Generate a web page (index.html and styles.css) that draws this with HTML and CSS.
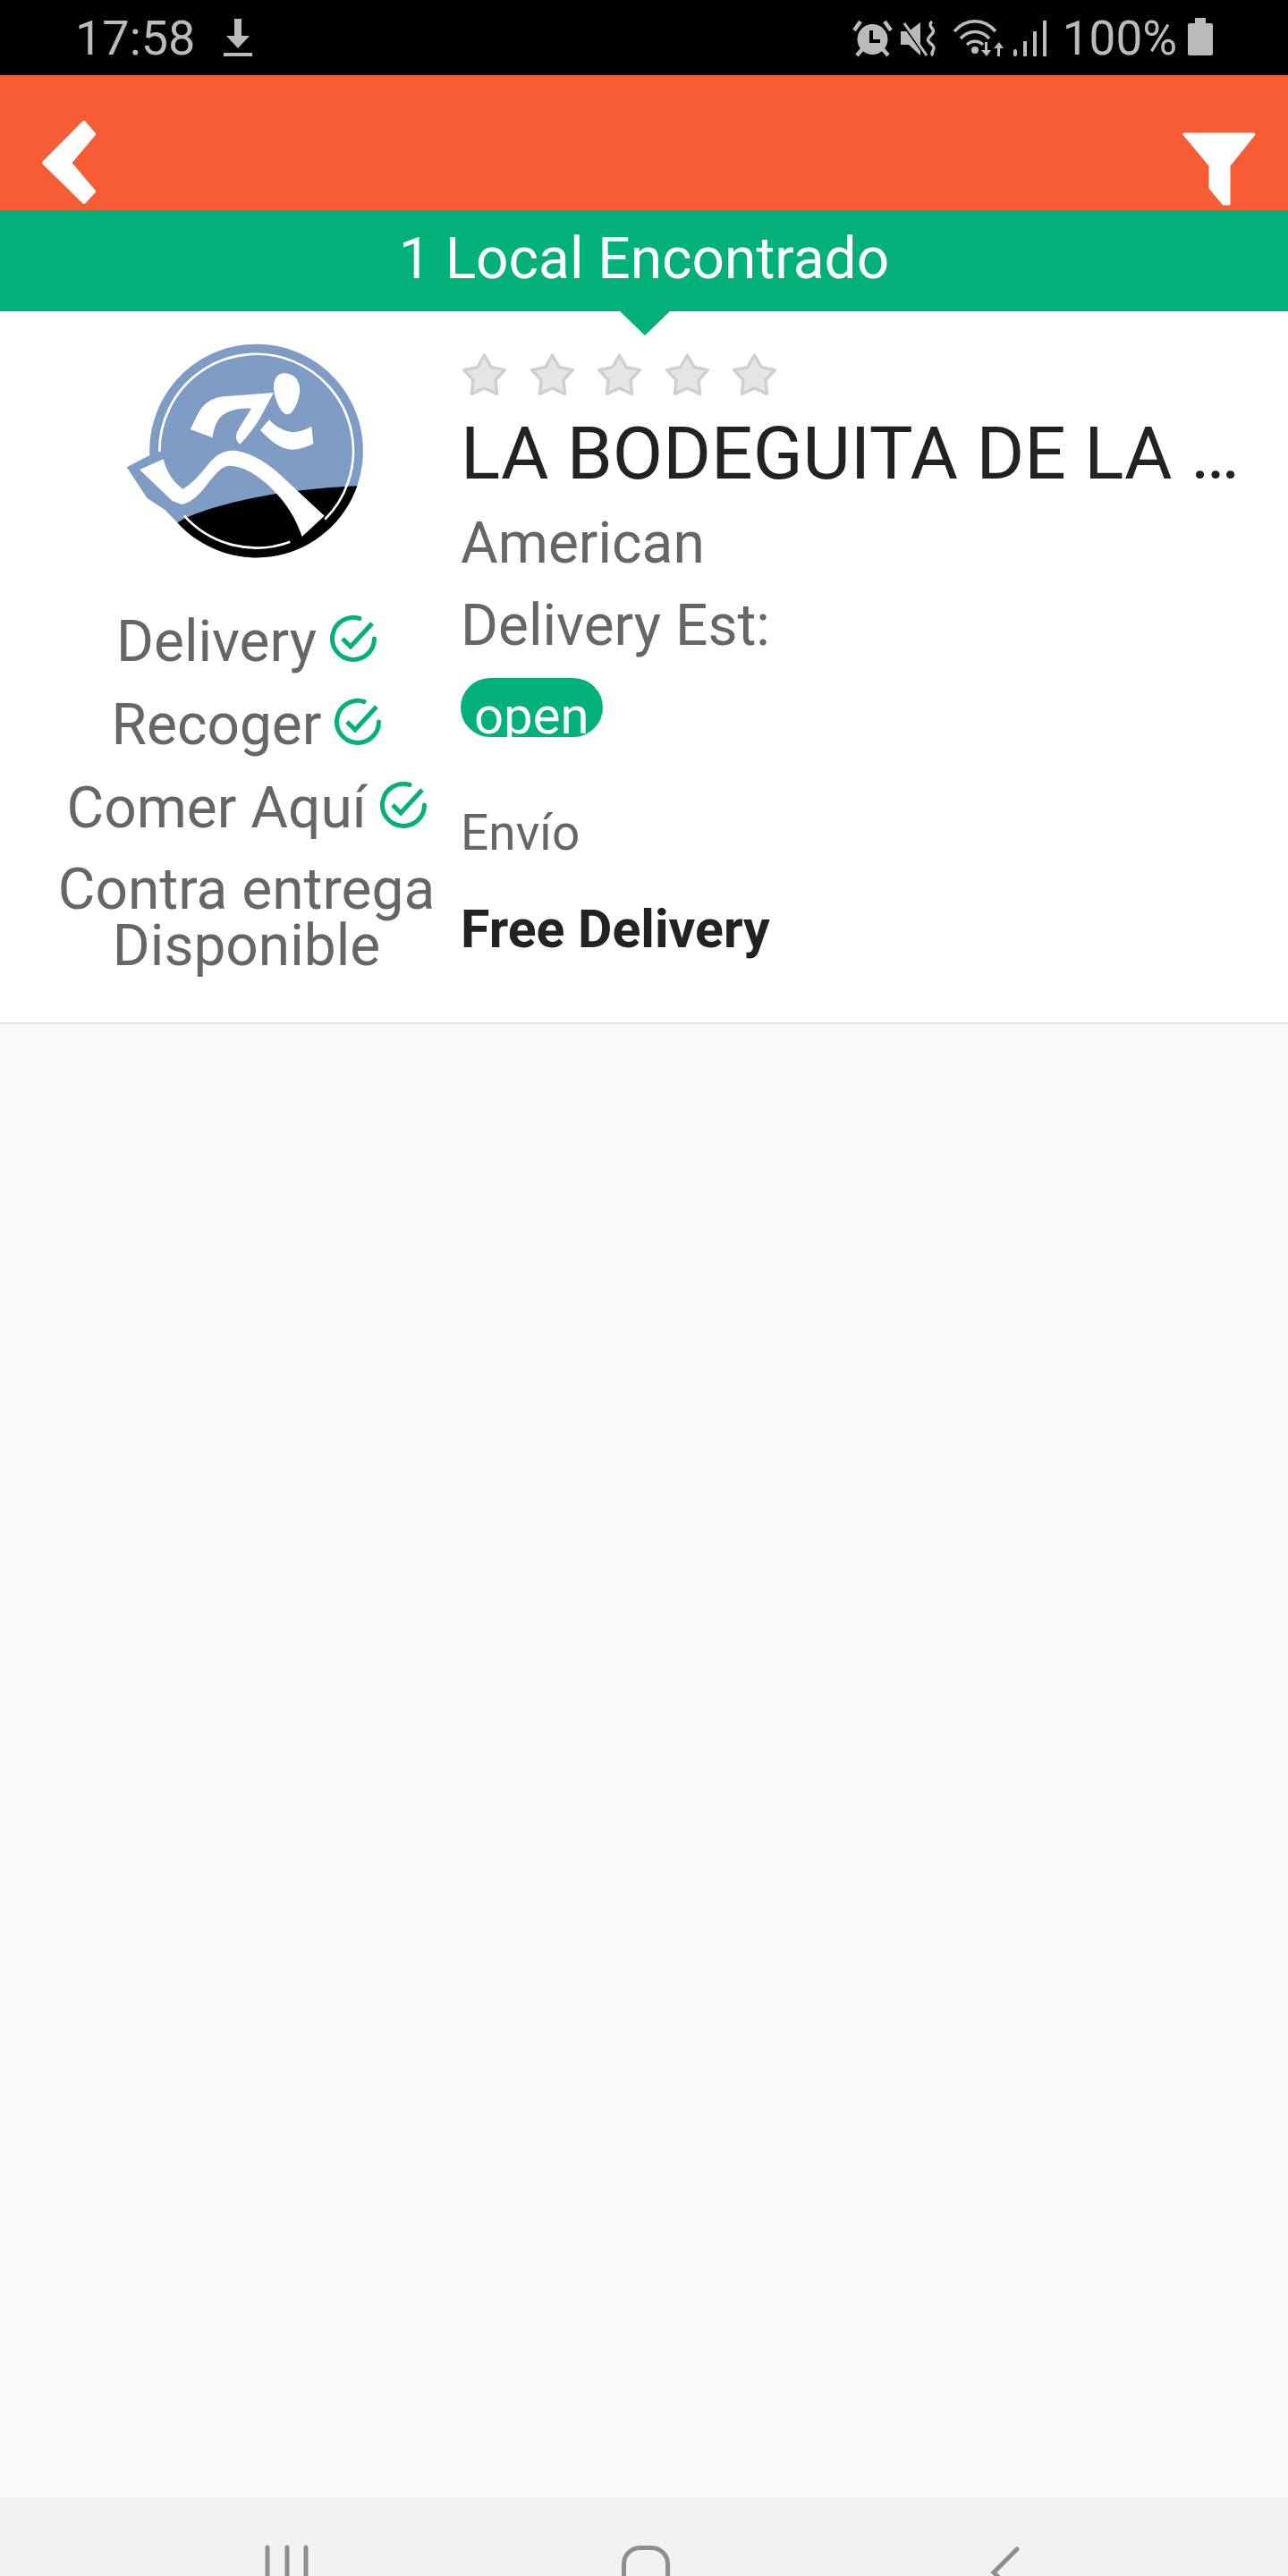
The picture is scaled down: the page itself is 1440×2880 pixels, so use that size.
FILE: index.html
```html
<!DOCTYPE html>
<html lang="es">
<head>
    <meta charset="UTF-8">
    <meta name="viewport" content="width=device-width, initial-scale=1.0">
    <title>Locales</title>
    <link rel="stylesheet" href="styles.css">
</head>
<body>
<div class="pantalla">
    <!-- barra de estado -->
    <div class="estado">
        <div class="estado-izq">
            <span class="hora">17:58</span>
            <svg class="ico-descarga" width="32" height="42" viewBox="0 0 32 42"><path d="M12 0h8v19h9L16 33 3 19h9z" fill="#bbb"/><rect y="38" width="32" height="4" fill="#bbb"/></svg>
        </div>
        <div class="estado-der">
            <svg width="45" height="42" viewBox="0 0 45 42" class="ico-alarma">
                <circle cx="22.500" cy="22" r="17" fill="#bbb"/>
                <path d="M21 12v12h10" fill="none" stroke="#000" stroke-width="4"/>
                <path d="M2 12L9 2M43 12L36 2M5 40l6-7M40 40l-6-7" stroke="#bbb" stroke-width="4.500" fill="none"/>
            </svg>
            <svg width="42" height="42" viewBox="0 0 42 42" class="ico-mudo">
                <path d="M0 13h9L22 3v37L9 28H0z" fill="#bbb"/>
                <path d="M4 6l24 34" stroke="#000" stroke-width="4"/>
                <path d="M4 4l25 36" stroke="#bbb" stroke-width="3"/>
                <path d="M35 2c-7 6 6 8 0 14s-6 7 0 12-3 8 1 12" fill="none" stroke="#bbb" stroke-width="3.500"/>
            </svg>
            <svg width="56" height="44" viewBox="0 0 56 44" class="ico-wifi">
                <path d="M1 15C14 0 34 0 47 15M8 23c9-10 23-10 32 0M15 30c5-5 13-5 18 0" fill="none" stroke="#bbb" stroke-width="3.500"/>
                <circle cx="24" cy="36" r="4" fill="#bbb"/>
                <path d="M35 27h3v9h4l-5 7-6-7h4zM49 43h3v-9h4l-5-7-6 7h4z" fill="#bbb"/>
            </svg>
            <svg width="37" height="40" viewBox="0 0 37 40" class="ico-senal">
                <rect y="32" width="4" height="8" rx="2" fill="#bbb"/>
                <rect x="11" y="23" width="4" height="17" fill="#bbb"/>
                <rect x="22" y="12" width="4" height="28" fill="#bbb"/>
                <rect x="33" y="0" width="4" height="40" fill="#bbb"/>
            </svg>
            <span class="bateria-txt">100%</span>
            <svg width="28" height="42" viewBox="0 0 28 42"><path d="M8 0h12v6h6a2 2 0 0 1 2 2v32a2 2 0 0 1-2 2H2a2 2 0 0 1-2-2V8a2 2 0 0 1 2-2h6z" fill="#bbb"/></svg>
        </div>
    </div>

    <div class="topo">
        <svg class="voltar" width="60" height="93" viewBox="0 0 60 93"><path d="M47 2L58 15 31 47 58 79 47 91 2 47z" fill="#fff" stroke="#fff" stroke-width="4" stroke-linejoin="round"/></svg>
        <svg class="filtro" width="82" height="82" viewBox="0 0 82 82"><path d="M2 2H80L52 37V80L46 80 31 62V37z" fill="#fff" stroke="#fff" stroke-width="3" stroke-linejoin="round"/></svg>
    </div>

    <div class="faixa">1 Local Encontrado</div>

    <div class="card">
        <div class="card-esq">
            <svg class="logo" width="300" height="280" viewBox="0 0 900 840">
                <path d="M62 487L139 447A358 358 0 1 1 232.500 673.500L190 630 130 590Z" fill="#7f9dc4"/>
                <path d="M232.500 673.500C250 660 265 655 275 650 400 600 600 560 835 550A358 358 0 0 1 232.500 673.500Z" fill="#000"/>
                <path d="M172 435A325 325 0 1 1 727 662" fill="none" stroke="#fff" stroke-width="8"/>
                <path d="M255 650A325 325 0 0 0 610 737" fill="none" stroke="#fff" stroke-width="8"/>
                <path d="M105 495L185 460C195 500 215 535 250 560 280 545 310 510 335 478 365 440 395 428 430 432 480 440 530 470 580 515L725 650 650 720C630 660 600 610 550 560 500 510 450 482 405 482 375 485 350 520 320 560 295 590 265 610 245 612L215 600Z" fill="#fff"/>
                <path d="M275 360L300 310C320 270 350 255 385 250L555 237 510 320C490 355 465 385 442 410 425 395 425 380 440 355L480 290C440 288 400 295 375 320 360 340 352 365 350 388Z" fill="#fff"/>
                <path d="M590 172C625 172 645 200 642 235 638 270 620 310 600 310 575 305 555 250 555 215 555 190 570 172 590 172Z" fill="#fff"/>
                <path d="M540 328C560 350 590 368 620 370 645 368 665 360 682 350L688 408C665 420 640 428 615 428 575 425 540 395 510 362Z" fill="#fff"/>
            </svg>
            <div class="servico">Delivery
                <svg class="check" width="52" height="52" viewBox="0 0 52 52"><path d="M33 3.500A23.500 23.500 0 1 0 49.500 26" fill="none" stroke="#02b07a" stroke-width="5" stroke-linecap="round"/><path d="M14 26l9 9L47 9" fill="none" stroke="#02b07a" stroke-width="5"/></svg>
            </div>
            <div class="servico">Recoger
                <svg class="check" width="52" height="52" viewBox="0 0 52 52"><path d="M33 3.500A23.500 23.500 0 1 0 49.500 26" fill="none" stroke="#02b07a" stroke-width="5" stroke-linecap="round"/><path d="M14 26l9 9L47 9" fill="none" stroke="#02b07a" stroke-width="5"/></svg>
            </div>
            <div class="servico">Comer Aquí
                <svg class="check" width="52" height="52" viewBox="0 0 52 52"><path d="M33 3.500A23.500 23.500 0 1 0 49.500 26" fill="none" stroke="#02b07a" stroke-width="5" stroke-linecap="round"/><path d="M14 26l9 9L47 9" fill="none" stroke="#02b07a" stroke-width="5"/></svg>
            </div>
            <div class="contra"><div>Contra entrega</div><div>Disponible</div></div>
        </div>
        <div class="card-der">
            <div class="estrelas">
                <svg width="51" height="48" viewBox="0 0 51 48"><path class="estrela" d="M25.500 2L33.100 15.500 48.300 18.600 37.900 30 39.600 45.400 25.500 39 11.400 45.400 13.100 30 2.700 18.600 17.900 15.500z"/></svg>
                <svg width="51" height="48" viewBox="0 0 51 48"><path class="estrela" d="M25.500 2L33.100 15.500 48.300 18.600 37.900 30 39.600 45.400 25.500 39 11.400 45.400 13.100 30 2.700 18.600 17.900 15.500z"/></svg>
                <svg width="51" height="48" viewBox="0 0 51 48"><path class="estrela" d="M25.500 2L33.100 15.500 48.300 18.600 37.900 30 39.600 45.400 25.500 39 11.400 45.400 13.100 30 2.700 18.600 17.900 15.500z"/></svg>
                <svg width="51" height="48" viewBox="0 0 51 48"><path class="estrela" d="M25.500 2L33.100 15.500 48.300 18.600 37.900 30 39.600 45.400 25.500 39 11.400 45.400 13.100 30 2.700 18.600 17.900 15.500z"/></svg>
                <svg width="51" height="48" viewBox="0 0 51 48"><path class="estrela" d="M25.500 2L33.100 15.500 48.300 18.600 37.900 30 39.600 45.400 25.500 39 11.400 45.400 13.100 30 2.700 18.600 17.900 15.500z"/></svg>
            </div>
            <div class="titulo">LA BODEGUITA DE LA …</div>
            <div class="linha linha-tipo">American</div>
            <div class="linha">Delivery Est:</div>
            <div class="aberto">open</div>
            <div class="envio">Envío</div>
            <div class="gratis">Free Delivery</div>
        </div>
    </div>

    <div class="vazio"></div>

    <div class="navegacao">
        <svg width="48" height="60" viewBox="0 0 48 60"><path d="M3 2V60M25 2V60M46 2V60" fill="none" stroke="#8f8f8f" stroke-width="5" stroke-linecap="round"/></svg>
        <svg class="nav-home" width="54" height="60" viewBox="0 0 54 60"><rect x="2.500" y="2.500" width="49" height="80" rx="18" fill="none" stroke="#8f8f8f" stroke-width="5"/></svg>
        <svg width="32" height="60" viewBox="0 0 32 60"><path d="M29 4L3 30 29 56" fill="none" stroke="#8f8f8f" stroke-width="5" stroke-linecap="round"/></svg>
    </div>
</div>
</body>
</html>
```

FILE: styles.css
```css
* {
    box-sizing: border-box;
}

body {
    margin: 0;
    font-family: Roboto, "Liberation Sans", sans-serif;
    background: #f9f9f9;
}

.pantalla {
    display: flex;
    flex-direction: column;
    height: 2880px;
    overflow: hidden;
}

/* barra de estado */
.estado {
    display: flex;
    justify-content: space-between;
    height: 84px;
    padding: 20px 84px 0 84px;
    background: #000;
    color: #bbb;
    font-size: 54px;
    flex-shrink: 0;
}

.estado-izq,
.estado-der {
    display: flex;
    align-items: flex-start;
}

.hora,
.bateria-txt {
    line-height: 46px;
}

.ico-descarga {
    margin: 1px 0 0 32px;
}

.ico-alarma {
    margin-top: 2px;
    margin-right: 9px;
}

.ico-mudo {
    margin-top: 2px;
    margin-right: 17px;
}

.ico-senal {
    margin: 3px 18px 0 11px;
}

.bateria-txt {
    margin-right: 12px;
    font-size: 53px;
}

/* topo */
.topo {
    display: flex;
    justify-content: space-between;
    align-items: flex-end;
    height: 151px;
    padding: 0 36px 5px 47px;
    background: #f65d35;
    flex-shrink: 0;
}

.voltar {
    margin-bottom: 2px;
}

.faixa {
    position: relative;
    height: 113px;
    background: #02b07a;
    color: #fff;
    font-size: 64px;
    line-height: 110px;
    text-align: center;
    flex-shrink: 0;
}

.faixa::after {
    content: "";
    position: absolute;
    left: 693px;
    top: 113px;
    border-left: 28px solid transparent;
    border-right: 28px solid transparent;
    border-top: 27px solid #02b07a;
}

/* card */
.card {
    display: flex;
    height: 797px;
    background: #fff;
    border-bottom: 2px solid #e4e4e4;
    flex-shrink: 0;
}

.card-esq {
    display: flex;
    flex-direction: column;
    align-items: center;
    width: 515px;
    padding: 12px 0 0 36px;
    color: #666;
    font-size: 64px;
}

.logo {
    margin: 0 10px 31px 0;
    flex-shrink: 0;
}

.servico {
    display: flex;
    align-items: center;
    gap: 15px;
    height: 93px;
    line-height: 93px;
    white-space: nowrap;
}

.check {
    margin-bottom: 7px;
}

.contra {
    margin-top: 13px;
    text-align: center;
    white-space: nowrap;
}

.contra div {
    height: 63px;
    line-height: 63px;
}

.card-der {
    flex: 1;
    min-width: 0;
    padding-top: 47px;
}

.estrelas {
    display: flex;
    gap: 24.5px;
    height: 48px;
    margin-left: 1px;
}

.estrela {
    fill: #e5e5e3;
    stroke: #d0d0d0;
    stroke-width: 3.5;
    stroke-linejoin: round;
    filter: blur(0.6px);
}

.titulo {
    margin-top: 19px;
    color: #222;
    font-size: 82px;
    line-height: 90px;
    white-space: nowrap;
}

.linha {
    color: #666;
    font-size: 64px;
    line-height: 92px;
}

.linha-tipo {
    margin-top: 10px;
}

.aberto {
    width: 159px;
    height: 66px;
    margin-top: 12px;
    padding: 9px 0 0 15px;
    border-radius: 33px;
    background: #02b07a;
    color: #fff;
    font-size: 58px;
    line-height: 66px;
}

.envio {
    margin-top: 72px;
    color: #666;
    font-size: 55px;
    line-height: 70px;
}

.gratis {
    margin-top: 38px;
    color: #222;
    font-size: 59px;
    font-weight: 700;
    line-height: 70px;
}

.vazio {
    flex: 1;
    background: #f9f9f9;
}

/* barra de navegacao */
.navegacao {
    display: flex;
    justify-content: space-between;
    height: 88px;
    padding: 54px 300px 0 296px;
    overflow: hidden;
    background: #f2f2f2;
    flex-shrink: 0;
}

.navegacao svg {
    flex-shrink: 0;
    overflow: visible;
}

.nav-home {
    margin-right: 8px;
}
```
